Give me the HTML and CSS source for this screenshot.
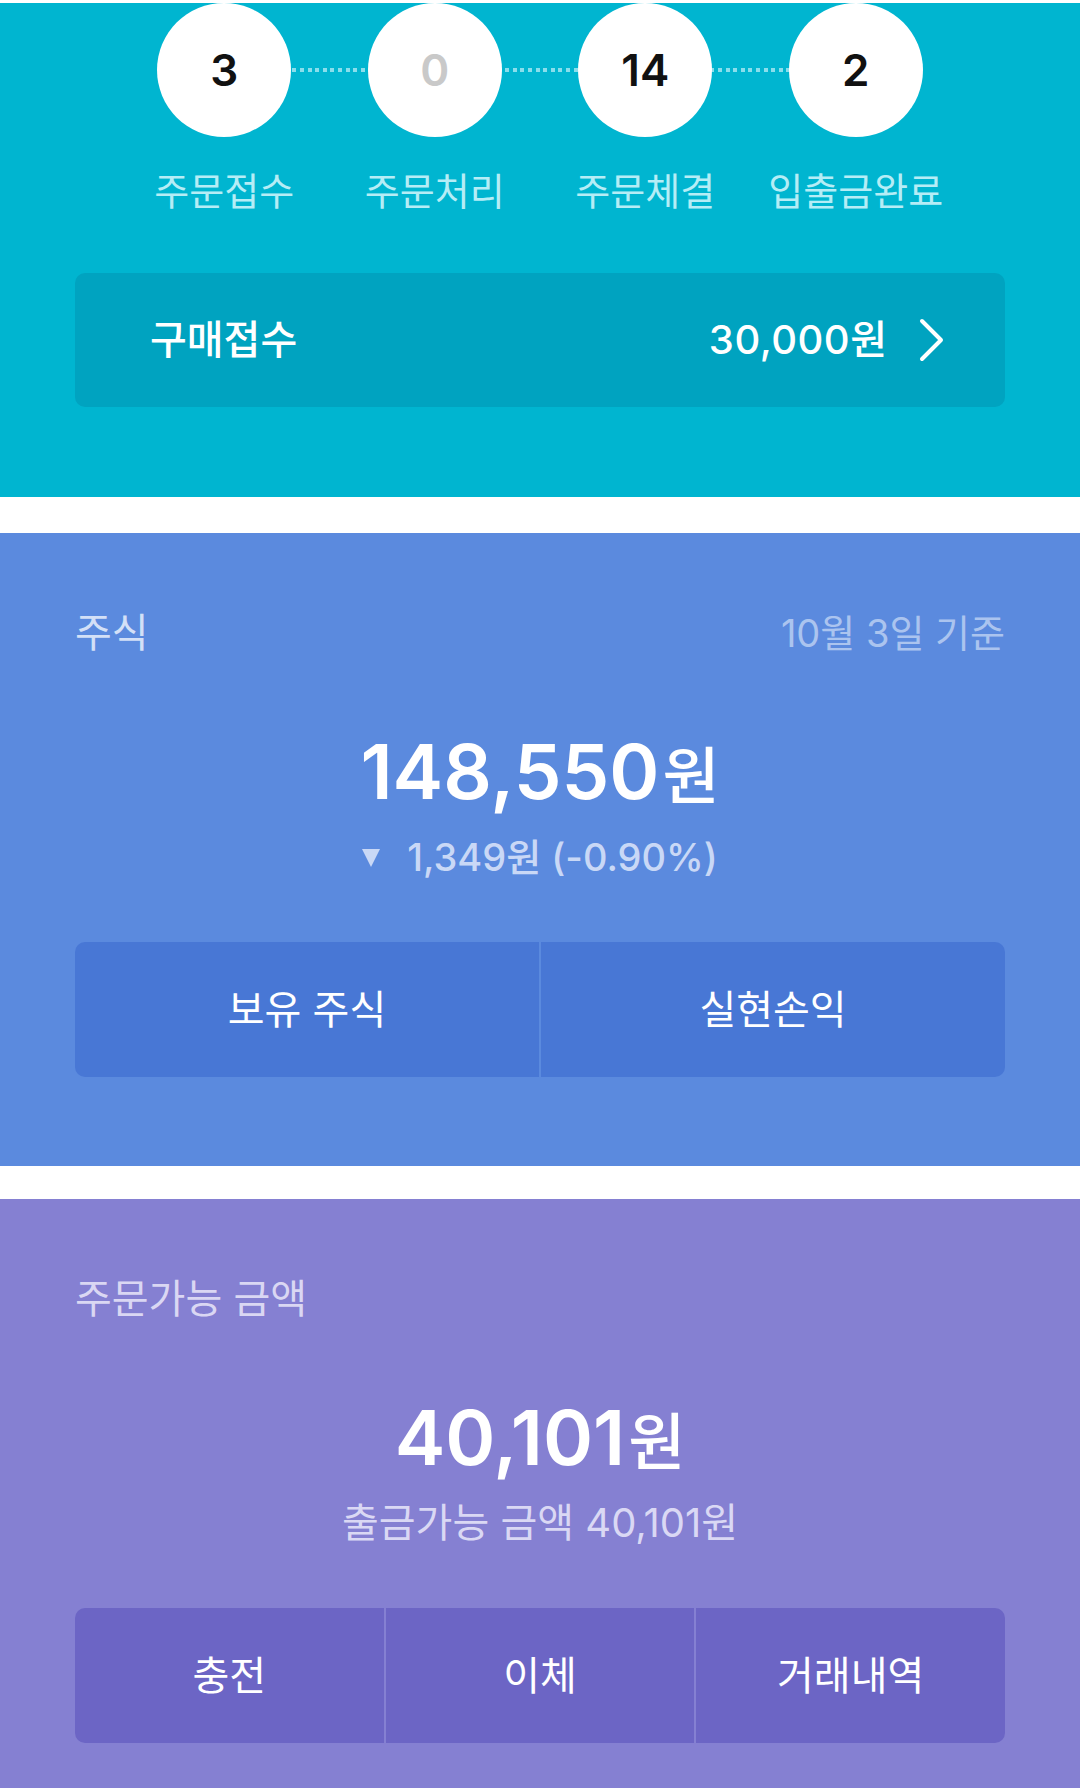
FILE: index.html
```html
<!DOCTYPE html>
<html lang="ko">
<head>
<meta charset="utf-8">
<title>자산</title>
<link rel="stylesheet" href="styles.css">
</head>
<body>
<section class="orders">
  <div class="steps">
    <div class="step">
      <div class="circle"><span class="num">3</span></div>
      <div class="step-label">주문접수</div>
    </div>
    <div class="step">
      <div class="circle"><span class="num zero">0</span></div>
      <div class="step-label">주문처리</div>
    </div>
    <div class="step">
      <div class="circle"><span class="num">14</span></div>
      <div class="step-label">주문체결</div>
    </div>
    <div class="step">
      <div class="circle"><span class="num">2</span></div>
      <div class="step-label">입출금완료</div>
    </div>
  </div>
  <div class="receipt">
    <span class="receipt-title">구매접수</span>
    <span class="receipt-right">
      <span class="receipt-amount">30,000<span class="won-s">원</span></span>
      <svg class="chev" width="26" height="44" viewBox="0 0 26 44"><polyline points="3,3 22,22 3,41" fill="none" stroke="#fff" stroke-width="4" stroke-linecap="round" stroke-linejoin="round"/></svg>
    </span>
  </div>
</section>

<section class="panel stock">
  <div class="panel-head">
    <span class="panel-label">주식</span>
    <span class="panel-date">10월 3일 기준</span>
  </div>
  <div class="big"><span class="big-num">148,550</span><span class="big-won">원</span></div>
  <div class="change">
    <svg class="tri" width="18" height="20" viewBox="0 0 18 20"><polygon points="0,2 18,2 9,20" fill="#c9d8f6"/></svg>
    <span>1,349원 (-0.90%)</span>
  </div>
  <div class="actions two">
    <div class="action">보유 주식</div>
    <div class="action">실현손익</div>
  </div>
</section>

<section class="panel cash">
  <div class="panel-head">
    <span class="panel-label">주문가능 금액</span>
  </div>
  <div class="big"><span class="big-num">40,101</span><span class="big-won">원</span></div>
  <div class="sub">출금가능 금액 40,101원</div>
  <div class="actions three">
    <div class="action">충전</div>
    <div class="action">이체</div>
    <div class="action">거래내역</div>
  </div>
</section>
</body>
</html>
```

FILE: styles.css
```css
* { box-sizing: border-box; }

html, body {
  margin: 0;
  padding: 0;
  background: #ffffff;
}

body {
  width: 1080px;
  font-family: "Inter", "Noto Sans CJK KR", sans-serif;
  color: #ffffff;
}

/* ---------- top (orders) ---------- */
.orders {
  margin-top: 8px;
  background: #00b5d0;
  padding: 0 75px 90px;
}

.steps {
  position: relative;
  width: 842px;
  margin: -5px auto 0;
  display: grid;
  grid-template-columns: repeat(4, 1fr);
}

.steps::before {
  content: "";
  position: absolute;
  left: 105px;
  right: 105px;
  top: 65px;
  height: 4px;
  background: repeating-linear-gradient(90deg, #8adeec 0 4px, transparent 4px 7.6px);
}

.step {
  display: flex;
  flex-direction: column;
  align-items: center;
  position: relative;
}

.circle {
  width: 134px;
  height: 134px;
  border-radius: 50%;
  background: #ffffff;
  display: flex;
  align-items: center;
  justify-content: center;
}

.num {
  font-size: 44px;
  font-weight: 600;
  color: #111111;
  line-height: 1;
}

.num.zero { color: #c9c9c9; }

.step-label {
  margin-top: 29px;
  line-height: 50px;
  font-size: 38px;
  color: #b5edf6;
  white-space: nowrap;
}

.receipt {
  margin-top: 57px;
  height: 134px;
  border-radius: 10px;
  background: #00a3c0;
  display: flex;
  align-items: center;
  justify-content: space-between;
  padding: 0 60px 0 75px;
}

.receipt-title {
  font-size: 40px;
  font-weight: 500;
  line-height: 50px;
}

.receipt-right {
  display: flex;
  align-items: center;
  gap: 32px;
}

.receipt-amount {
  font-size: 40px;
  font-weight: 500;
  letter-spacing: 0.5px;
  line-height: 50px;
}

.won-s { letter-spacing: 0; }

.chev { display: block; }

/* ---------- panels ---------- */
.panel {
  padding: 75px 75px 89px;
}

.stock {
  margin-top: 36px;
  background: #5b8ade;
}

.cash {
  margin-top: 33px;
  background: #8580d2;
  padding-bottom: 48px;
}

.panel-head {
  display: flex;
  justify-content: space-between;
  align-items: center;
  height: 50px;
}

.panel-label {
  font-size: 40px;
  line-height: 50px;
}

.stock .panel-label { color: #d3e0f7; }
.cash .panel-label { color: #dad7f3; }

.panel-date {
  font-size: 38px;
  line-height: 50px;
  color: #abc4ef;
}

.big {
  margin-top: 68px;
  height: 90px;
  display: flex;
  justify-content: center;
  align-items: baseline;
  line-height: 90px;
}

.big-num {
  font-size: 76px;
  font-weight: 600;
  letter-spacing: 0;
}

.big-won {
  font-size: 62px;
  font-weight: 500;
  margin-left: 3px;
}

.change {
  margin-top: 16px;
  height: 50px;
  display: flex;
  justify-content: center;
  align-items: center;
  gap: 27px;
  font-size: 38px;
  line-height: 50px;
  color: #c9d8f6;
  font-weight: 500;
}

.tri { display: block; }

.sub {
  margin-top: 16px;
  height: 50px;
  text-align: center;
  font-size: 40px;
  line-height: 50px;
  color: #dad8f4;
}

.actions {
  margin-top: 60px;
  height: 135px;
  display: grid;
  gap: 2px;
  border-radius: 10px;
  overflow: hidden;
}

.actions.two { grid-template-columns: 1fr 1fr; }
.actions.three { grid-template-columns: 1fr 1fr 1fr; }

.action {
  display: flex;
  align-items: center;
  justify-content: center;
  font-size: 40px;
  line-height: 50px;
  color: #ffffff;
}

.stock .action { background: #4877d5; }
.cash .action { background: #6c65c5; }
```
